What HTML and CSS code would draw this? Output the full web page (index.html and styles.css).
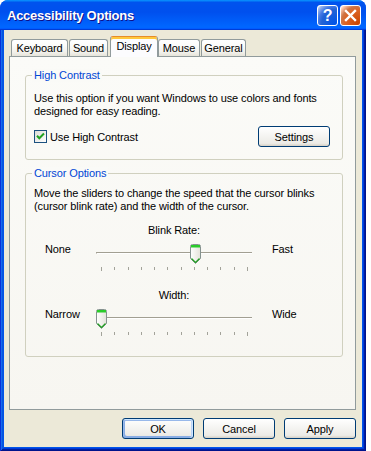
FILE: index.html
```html
<!DOCTYPE html>
<html>
<head>
<meta charset="utf-8">
<title>Accessibility Options</title>
<link rel="stylesheet" href="styles.css">
</head>
<body>
<div class="window">
  <div class="titlebar">
    <span class="title">Accessibility Options</span>
    <div class="tb-buttons">
      <span class="tb-btn help">?</span>
      <span class="tb-btn close"><svg width="19" height="19" viewBox="0 0 19 19"><path d="M5 5 L14 14 M14 5 L5 14" stroke="#fff" stroke-width="2.4" stroke-linecap="square"/></svg></span>
    </div>
  </div>
  <div class="frame">
    <div class="client">
      <div class="tabs">
        <div class="tab tab-keyboard">Keyboard</div>
        <div class="tab tab-sound">Sound</div>
        <div class="tab tab-display active">Display</div>
        <div class="tab tab-mouse">Mouse</div>
        <div class="tab tab-general">General</div>
      </div>
      <div class="panel">
        <div class="group group-contrast">
          <div class="legend">High Contrast</div>
          <p class="desc desc-contrast">Use this option if you want Windows to use colors and fonts<br>designed for easy reading.</p>
          <div class="contrast-row">
            <label class="check"><span class="checkbox"><svg width="11" height="11" viewBox="0 0 11 11"><path d="M2 4.8 L4.3 7.2 L9 2.5" fill="none" stroke="#21A121" stroke-width="2"/></svg></span>Use High Contrast</label>
            <button class="btn btn-settings">Settings</button>
          </div>
        </div>
        <div class="group group-cursor">
          <div class="legend">Cursor Options</div>
          <p class="desc desc-cursor">Move the sliders to change the speed that the cursor blinks<br>(cursor blink rate) and the width of the cursor.</p>
          <div class="slider slider-blink">
            <div class="caption">Blink Rate:</div>
            <span class="side">None</span>
            <div class="track">
              <div class="channel"></div>
              <svg class="thumb" style="left:94px" width="11" height="20" viewBox="0 0 11 20"><defs><linearGradient id="tg1" x1="0" y1="0" x2="1" y2="0"><stop offset="0" stop-color="#FFFFFF"/><stop offset="1" stop-color="#E4E2DA"/></linearGradient></defs><path d="M0.5 2.5 Q0.5 0.5 2.5 0.5 H8.5 Q10.5 0.5 10.5 2.5 V14.5 L5.5 19.5 L0.5 14.5 Z" fill="url(#tg1)" stroke="#85928F"/><rect x="1" y="1" width="9" height="2.5" fill="#2BCB2B"/><polyline points="1.5,14.5 5.5,18.5 9.5,14.5" fill="none" stroke="#21A121" stroke-width="1.2"/></svg>
            </div>
            <span class="side side-right">Fast</span>
            <div class="ticks"><i class="end"></i><i></i><i></i><i></i><i></i><i></i><i></i><i></i><i></i><i></i><i></i><i class="end"></i></div>
          </div>
          <div class="slider slider-width">
            <div class="caption">Width:</div>
            <span class="side">Narrow</span>
            <div class="track">
              <div class="channel"></div>
              <svg class="thumb" style="left:0px" width="11" height="20" viewBox="0 0 11 20"><defs><linearGradient id="tg2" x1="0" y1="0" x2="1" y2="0"><stop offset="0" stop-color="#FFFFFF"/><stop offset="1" stop-color="#E4E2DA"/></linearGradient></defs><path d="M0.5 2.5 Q0.5 0.5 2.5 0.5 H8.5 Q10.5 0.5 10.5 2.5 V14.5 L5.5 19.5 L0.5 14.5 Z" fill="url(#tg2)" stroke="#85928F"/><rect x="1" y="1" width="9" height="2.5" fill="#2BCB2B"/><polyline points="1.5,14.5 5.5,18.5 9.5,14.5" fill="none" stroke="#21A121" stroke-width="1.2"/></svg>
            </div>
            <span class="side side-right">Wide</span>
            <div class="ticks"><i class="end"></i><i></i><i></i><i></i><i></i><i></i><i></i><i></i><i></i><i></i><i></i><i class="end"></i></div>
          </div>
        </div>
      </div>
      <div class="actions">
        <button class="btn btn-default">OK</button>
        <button class="btn">Cancel</button>
        <button class="btn">Apply</button>
      </div>
    </div>
  </div>
</div>
</body>
</html>
```
FILE: styles.css
```css
* { box-sizing: border-box; }
html, body { margin: 0; padding: 0; background: #ffffff; }
body {
  font-family: "Liberation Sans", Arial, sans-serif;
  font-size: 11px;
  letter-spacing: -0.12px;
  color: #000;
}
.window {
  width: 366px;
  height: 451px;
  display: flex;
  flex-direction: column;
  border-radius: 8px 8px 0 0;
  background: #0055EA;
}
.titlebar {
  height: 30px;
  flex: none;
  display: flex;
  align-items: center;
  padding: 0 5px 0 7px;
  border-radius: 8px 8px 0 0;
  background: linear-gradient(180deg, #0997FF 0%, #0053EE 8%, #0050EE 40%, #0066FF 88%, #0066FF 93%, #005BFF 95%, #003DD7 96%, #003DD7 100%);
}
.title {
  flex: 1;
  color: #fff;
  font: bold 13px "Liberation Sans", Arial, sans-serif;
  text-shadow: 1px 1px #0F1089;
  letter-spacing: -0.25px;
}
.tb-buttons { display: flex; gap: 2px; margin-top: 1px; }
.tb-btn {
  width: 21px;
  height: 21px;
  border: 1px solid #fff;
  border-radius: 3px;
  display: flex;
  align-items: center;
  justify-content: center;
  color: #fff;
}
.help {
  background: radial-gradient(circle at 90% 90%, #0054E9 0%, #2263D5 55%, #4479E4 70%, #A3BBEC 90%, #fff 100%);
  font: bold 16px "Liberation Sans", Arial, sans-serif;
  line-height: 19px;
}
.close {
  background: radial-gradient(circle at 90% 90%, #CC4600 0%, #DC6527 55%, #CD7546 70%, #FFCCB2 90%, #fff 100%);
}
.frame {
  flex: 1;
  padding: 0 4px 4px;
  background: #0055EA;
  box-shadow: inset 1px 0 #0831D9, inset -1px 0 #00138C, inset 0 -1px #00138C, inset 2px 0 #166AEE, inset -2px 0 #001EA0, inset 0 -2px #001EA0, inset 3px 0 #0855DD, inset -3px 0 #003BDA, inset 0 -3px #003BDA;
}
.client {
  height: 100%;
  background: #ECE9D8;
  display: flex;
  flex-direction: column;
}
.tabs {
  height: 26px;
  display: flex;
  align-items: flex-end;
  padding: 6px 0 0 7px;
}
.tab {
  height: 17px;
  border: 1px solid #919B9C;
  border-bottom: 0;
  border-radius: 3px 3px 0 0;
  background: linear-gradient(180deg, #FFFFFF 0%, #FCFCFB 30%, #F2F1EC 75%, #E6E4DA 100%);
  text-align: center;
  line-height: 16px;
}
.tab-keyboard { width: 57px; margin-right: 1px; }
.tab-sound { width: 39px; margin-right: 2px; }
.tab-display { width: 48px; }
.tab-mouse { width: 42px; margin-right: 1px; }
.tab-general { width: 45px; }
.tab.active {
  height: 21px;
  margin-bottom: -1px;
  position: relative;
  z-index: 1;
  border-top-color: #E68B2C;
  background: #FCFCFE;
  box-shadow: inset 0 2px #FFC83C;
  line-height: 18px;
}
.panel {
  width: 347px;
  height: 354px;
  margin-left: 5px;
  border: 1px solid #919B9C;
  background: linear-gradient(180deg, #FBFBF8 0%, #F7F6F1 100%);
  padding: 18px 0 0 15px;
}
.group {
  width: 318px;
  border: 1px solid #D0D0BF;
  border-radius: 3px;
  padding: 0 12px 0 8px;
}
.group-contrast { height: 85px; }
.group-cursor { height: 184px; margin-top: 13px; }
.legend {
  width: fit-content;
  margin: -7px 0 0 -2px;
  padding: 0 2px;
  line-height: 13px;
  color: #0046D5;
  background: #FAFAF7;
}
.desc {
  margin: 0;
  line-height: 13px;
  white-space: nowrap;
}
.desc-contrast { margin-top: 10px; }
.desc-cursor { margin-top: 7px; }
.contrast-row {
  margin-top: 8px;
  height: 21px;
  display: flex;
  align-items: center;
  justify-content: space-between;
}
.check { display: flex; align-items: center; }
.checkbox {
  width: 13px;
  height: 13px;
  border: 1px solid #1C5180;
  background: linear-gradient(135deg, #DCDCD7, #FFFFFF);
  margin-right: 3px;
  display: flex;
}
.btn {
  width: 72px;
  height: 21px;
  padding: 0;
  font: 11px "Liberation Sans", Arial, sans-serif;
  letter-spacing: -0.12px;
  color: #000;
  border: 1px solid #003C74;
  border-radius: 3px;
  background: linear-gradient(180deg, #FFFFFF, #ECEBE6 86%, #D6D0C5);
}
.btn-default {
  box-shadow: inset -1px 1px #CEE7FF, inset 1px 2px #98B8EA, inset -2px 0 #BCD4F6, inset 1px -1px #89ADE4, inset 2px -2px #89ADE4;
}
.slider {
  margin-left: 11px;
  display: grid;
  grid-template-columns: 51px 156px auto;
  line-height: 13px;
}
.slider-blink { margin-top: 11px; }
.slider-width { margin-top: 18px; }
.caption {
  grid-column: 2;
  text-align: center;
}
.side {
  grid-column: 1;
  margin-top: 6px;
}
.side-right { grid-column: 3; padding-left: 20px; }
.track {
  grid-column: 2;
  grid-row: 2;
  position: relative;
  height: 20px;
  margin-top: 6px;
}
.slider .side { grid-row: 2; }
.channel {
  position: absolute;
  left: 0;
  right: 0;
  top: 9px;
  height: 2px;
  border-top: 1px solid #A29F92;
  border-bottom: 1px solid #FFFFFF;
  border-left: 1px solid #A29F92;
}
.thumb {
  position: absolute;
  top: 1px;
}
.ticks {
  grid-column: 2;
  grid-row: 3;
  margin-top: 4px;
  height: 4px;
  display: flex;
  justify-content: space-between;
  align-items: flex-start;
  padding: 0 4px 0 5px;
}
.ticks i {
  width: 1px;
  height: 3px;
  background: #A3A39A;
}
.ticks i.end { height: 4px; }
.actions {
  display: flex;
  justify-content: flex-end;
  gap: 9px;
  margin-top: 8px;
  padding-right: 6px;
}
```
